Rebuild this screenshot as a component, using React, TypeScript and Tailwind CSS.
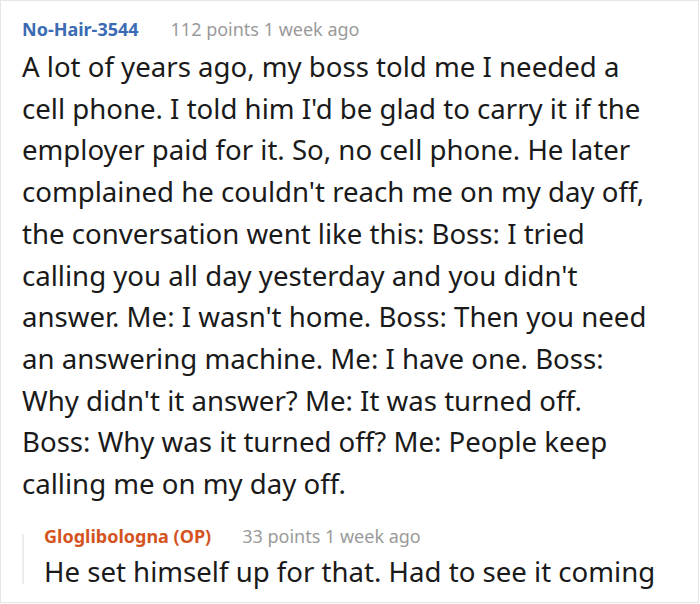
import React from "react";

const lines = [
  "A lot of years ago, my boss told me I needed a",
  "cell phone. I told him I'd be glad to carry it if the",
  "employer paid for it. So, no cell phone. He later",
  "complained he couldn't reach me on my day off,",
  "the conversation went like this: Boss: I tried",
  "calling you all day yesterday and you didn't",
  "answer. Me: I wasn't home. Boss: Then you need",
  "an answering machine. Me: I have one. Boss:",
  "Why didn't it answer? Me: It was turned off.",
  "Boss: Why was it turned off? Me: People keep",
  "calling me on my day off.",
];

export default function App() {
  return (
    <div
      className="w-[699px] h-[603px] border border-[#e6e6e6] bg-white overflow-hidden"
      style={{ fontFamily: '"Noto Sans", "Open Sans", sans-serif' }}
    >
      <div className="pl-[21px] pr-[8px] pt-[14px]">
        <div className="flex items-baseline text-[18px] leading-[28px]">
          <span className="font-bold text-[#3a6bb3]">No-Hair-3544</span>
          <span className="ml-[32px] text-[#9a9a9a]">112 points 1 week ago</span>
        </div>
        <p className="mt-[3px] text-[27.6px] leading-[41.7px] text-[#1a1a1a] whitespace-nowrap">
          {lines.map((l, i) => (
            <React.Fragment key={i}>
              {l}
              {i < lines.length - 1 && <br />}
            </React.Fragment>
          ))}
        </p>
        <div className="mt-[17px] flex">
          <div className="mt-[12px] h-[50px] w-[2px] bg-[#ececec]" />
          <div className="pl-[20px] whitespace-nowrap">
            <div className="flex items-baseline text-[18px] leading-[29px]">
              <span className="font-bold text-[#d3541f]">Gloglibologna (OP)</span>
              <span className="ml-[31px] text-[#9a9a9a]">33 points 1 week ago</span>
            </div>
            <p className="text-[27.6px] leading-[41.7px] text-[#1a1a1a]">
              He set himself up for that. Had to see it coming
            </p>
          </div>
        </div>
      </div>
    </div>
  );
}
